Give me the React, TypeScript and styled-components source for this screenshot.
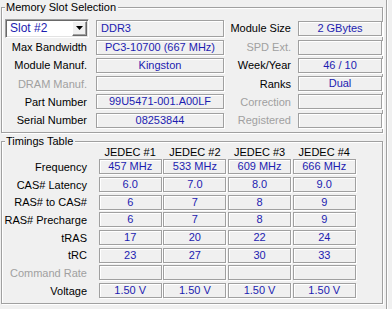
import React from "react";
import styled, { createGlobalStyle } from "styled-components";

const GlobalStyle = createGlobalStyle`
  html, body { margin: 0; padding: 0; background: #f0f0f0; }
  body {
    font-family: "Liberation Sans", Arial, sans-serif;
    font-size: 11px;
    color: #000;
  }
`;

const Page = styled.div`
  width: 387px;
  height: 309px;
  box-sizing: border-box;
  border-right: 1px solid #a0a0a0;
  box-shadow: 1px 0 0 #fff;
  padding-top: 1px;
  display: flex;
  flex-direction: column;
  gap: 2px;
`;

const Group = styled.fieldset<{ $h: number }>`
  margin: 0 0 0 1px;
  width: 382px;
  height: ${(p) => p.$h}px;
  box-sizing: border-box;
  border: 1px solid #a0a0a0;
  box-shadow: inset 1px 1px 0 #fff, 1px 1px 0 #fff;
  padding: 0 3px 0 1px;
  min-width: 0;
`;

const Legend = styled.legend`
  margin-left: 2px;
  padding: 0 2px 0 1px;
  line-height: 12px;
  background: #f0f0f0;
  font-size: 11px;
`;

const SlotGrid = styled.div`
  display: grid;
  grid-template-columns: 86px 128px 60px 84px;
  column-gap: 7px;
  grid-template-rows: 20px repeat(5, 18.25px);
  margin-top: 5px;
  align-items: center;
`;

const Label = styled.div<{ $disabled?: boolean }>`
  justify-self: end;
  white-space: nowrap;
  padding-right: 2px;
  color: ${(p) => (p.$disabled ? "#a0a0a0" : "#000")};
`;

const RightLabel = styled(Label)`
  padding-right: 0;
  margin-left: -3px;
`;

const ValueBox = styled.div<{ $left?: boolean; $tall?: boolean }>`
  box-sizing: border-box;
  height: ${(p) => (p.$tall ? 17 : 15)}px;
  border: 1px solid #a0a0a0;
  box-shadow: 1px 1px 0 #fff, inset 1px 1px 0 #fff;
  color: #1c1cb0;
  white-space: nowrap;
  overflow: hidden;
  display: flex;
  align-items: center;
  justify-content: ${(p) => (p.$left ? "flex-start" : "center")};
  padding-left: ${(p) => (p.$left ? "4px" : "0")};
  line-height: 13px;
`;

const Combo = styled.div`
  margin-left: 2px;
  width: 84px;
  height: 19px;
  box-sizing: border-box;
  background: #fff;
  border-style: solid;
  border-width: 1px;
  border-color: #a0a0a0 #fff #fff #a0a0a0;
  box-shadow: inset 1px 1px 0 #696969, inset -1px -1px 0 #e3e3e3;
  display: flex;
  align-items: center;
  padding: 1px 1px 1px 4px;
  color: #1c1cb0;
  font-size: 12px;
`;

const ComboText = styled.span`
  flex: 1;
`;

const ComboButton = styled.div`
  width: 15px;
  height: 15px;
  box-sizing: border-box;
  background: #f0f0f0;
  border-style: solid;
  border-width: 1px;
  border-color: #fff #696969 #696969 #fff;
  box-shadow: inset -1px -1px 0 #a0a0a0;
  display: flex;
  align-items: center;
  justify-content: center;
`;

const TimingGrid = styled.div`
  display: grid;
  grid-template-columns: 94px repeat(4, 63px);
  column-gap: 1.7px;
  grid-template-rows: 11px repeat(8, 17.7px);
  margin-top: 0;
  align-items: center;
`;

const TimingLabel = styled.div<{ $disabled?: boolean }>`
  justify-self: end;
  white-space: nowrap;
  padding-right: 10px;
  color: ${(p) => (p.$disabled ? "#a0a0a0" : "#000")};
`;

const Header = styled.div`
  text-align: center;
  line-height: 11px;
  white-space: nowrap;
`;

const slotRows: {
  label: string;
  dis?: boolean;
  value: string;
  rLabel: string;
  rDis?: boolean;
  rValue: string;
}[] = [
  { label: "Max Bandwidth", value: "PC3-10700 (667 MHz)", rLabel: "SPD Ext.", rDis: true, rValue: "" },
  { label: "Module Manuf.", value: "Kingston", rLabel: "Week/Year", rValue: "46 / 10" },
  { label: "DRAM Manuf.", dis: true, value: "", rLabel: "Ranks", rValue: "Dual" },
  { label: "Part Number", value: "99U5471-001.A00LF", rLabel: "Correction", rDis: true, rValue: "" },
  { label: "Serial Number", value: "08253844", rLabel: "Registered", rDis: true, rValue: "" },
];

const timingRows: { label: string; dis?: boolean; values: string[] }[] = [
  { label: "Frequency", values: ["457 MHz", "533 MHz", "609 MHz", "666 MHz"] },
  { label: "CAS# Latency", values: ["6.0", "7.0", "8.0", "9.0"] },
  { label: "RAS# to CAS#", values: ["6", "7", "8", "9"] },
  { label: "RAS# Precharge", values: ["6", "7", "8", "9"] },
  { label: "tRAS", values: ["17", "20", "22", "24"] },
  { label: "tRC", values: ["23", "27", "30", "33"] },
  { label: "Command Rate", dis: true, values: ["", "", "", ""] },
  { label: "Voltage", values: ["1.50 V", "1.50 V", "1.50 V", "1.50 V"] },
];

export default function App() {
  return (
    <>
      <GlobalStyle />
      <Page>
        <Group $h={132}>
          <Legend>Memory Slot Selection</Legend>
          <SlotGrid>
            <Combo>
              <ComboText>Slot #2</ComboText>
              <ComboButton>
                <svg width="7" height="4" viewBox="0 0 7 4">
                  <path d="M0 0h7L3.5 4z" fill="#000" />
                </svg>
              </ComboButton>
            </Combo>
            <ValueBox $left $tall>DDR3</ValueBox>
            <RightLabel>Module Size</RightLabel>
            <ValueBox>2 GBytes</ValueBox>
            {slotRows.map((r) => (
              <React.Fragment key={r.label}>
                <Label $disabled={r.dis}>{r.label}</Label>
                <ValueBox>{r.value}</ValueBox>
                <RightLabel $disabled={r.rDis}>{r.rLabel}</RightLabel>
                <ValueBox>{r.rValue}</ValueBox>
              </React.Fragment>
            ))}
          </SlotGrid>
        </Group>
        <Group $h={169}>
          <Legend>Timings Table</Legend>
          <TimingGrid>
            <div />
            {["JEDEC #1", "JEDEC #2", "JEDEC #3", "JEDEC #4"].map((h) => (
              <Header key={h}>{h}</Header>
            ))}
            {timingRows.map((r) => (
              <React.Fragment key={r.label}>
                <TimingLabel $disabled={r.dis}>{r.label}</TimingLabel>
                {r.values.map((v, i) => (
                  <ValueBox key={i}>{v}</ValueBox>
                ))}
              </React.Fragment>
            ))}
          </TimingGrid>
        </Group>
      </Page>
    </>
  );
}
